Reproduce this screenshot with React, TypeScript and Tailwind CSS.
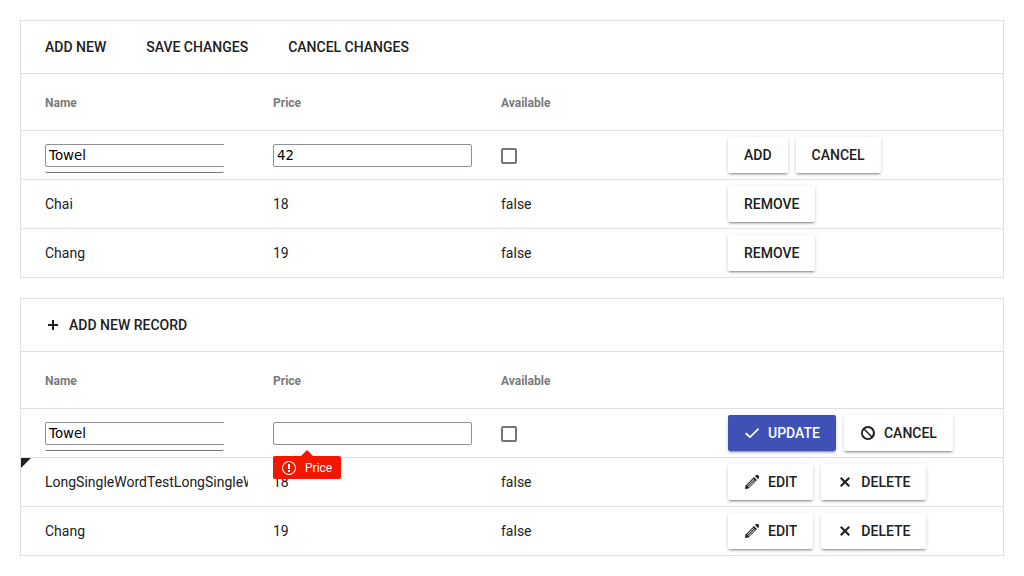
import type { ReactNode } from "react";

const btnBase =
  "flex h-9 items-center rounded-[2px] px-4 text-sm font-medium uppercase leading-5 shadow-[0_3px_1px_-2px_rgba(0,0,0,0.2),0_2px_2px_0_rgba(0,0,0,0.14),0_1px_5px_0_rgba(0,0,0,0.12)]";

function Icon({ name }: { name: "plus" | "check" | "cancel" | "edit" | "close" | "warning" }) {
  return (
    <svg viewBox="0 0 16 16" className="size-4 shrink-0" fill="currentColor">
      {name === "plus" && <path d="M7 3h2v4h4v2H9v4H7V9H3V7h4z" />}
      {name === "check" && <path d="M1 9l1.5-1.5L6 11l8-8L15 4.5 6 13.3z" />}
      {name === "cancel" && (
        <path
          fillRule="evenodd"
          d="M8 1a7 7 0 1 0 0 14A7 7 0 0 0 8 1zM8 3a5 5 0 0 1 4.030 7.970L5.030 3.970A5 5 0 0 1 8 3zM3.970 5.030L10.970 12.030A5 5 0 0 1 3.970 5.030z"
        />
      )}
      {name === "edit" && (
        <path
          fillRule="evenodd"
          d="M11 2l1-1h2l1 1v2l-1 1zM10 3l3 3-8.500 8.500L1 15l.5-3.500zM9.500 5L3 11.500l.5.5L10 5.500zM10.700 6.200L4.200 12.700l.5.5L11.200 6.700z"
        />
      )}
      {name === "close" && <path d="M13 4.500L9.500 8l3.500 3.500-1.500 1.500L8 9.500 4.500 13 3 11.500 6.500 8 3 4.500 4.500 3 8 6.500 11.500 3z" />}
      {name === "warning" && (
        <path
          fillRule="evenodd"
          d="M8 1a7 7 0 1 0 0 14A7 7 0 0 0 8 1zm0 1a6 6 0 1 1 0 12A6 6 0 0 1 8 2zM7 4h2v5H7zm0 6h2v2H7z"
        />
      )}
    </svg>
  );
}

function Button({ icon, primary, children }: { icon?: "check" | "cancel" | "edit" | "close"; primary?: boolean; children: ReactNode }) {
  return (
    <button className={`${btnBase} ${primary ? "bg-[#3f51b5] text-white" : "bg-white text-[#212121]"} ${icon ? "gap-2" : ""}`}>
      {icon && <Icon name={icon} />}
      {children}
    </button>
  );
}

function Row({ cells, last, dirty }: { cells: ReactNode[]; last?: boolean; dirty?: boolean }) {
  return (
    <div className={`grid grid-cols-[227px_228px_227px_300px] ${last ? "h-12" : "h-[49px]"}`}>
      {cells.map((cell, i) => (
        <div
          key={i}
          className={`relative flex min-w-0 items-center ${i ? "border-l border-l-white" : ""} ${last ? "" : "border-b border-b-[#e0e0e0]"} pl-6`}
        >
          {dirty && i === 0 && (
            <svg className="absolute left-0 top-0 size-[10px]" viewBox="0 0 10 10">
              <path d="M0 0h10L0 10z" fill="#212121" />
            </svg>
          )}
          {cell}
        </div>
      ))}
    </div>
  );
}

function NameEditor() {
  return (
    <div className="mt-[7px] flex h-[29px] w-[179px] flex-col overflow-hidden rounded-b-[2px] border-b border-[#757575]">
      <input
        defaultValue="Towel"
        className="h-[23px] w-[199px] shrink-0 rounded-[2px] border border-[#8f8f9d] px-[3px] font-['DejaVu_Sans',sans-serif] text-[13.333px] text-black"
      />
    </div>
  );
}

function PriceEditor({ value, error }: { value: string; error?: boolean }) {
  return (
    <div className="relative mt-px">
      <input
        defaultValue={value}
        className="block h-[23px] w-[199px] rounded-[2px] border border-[#8f8f9d] px-[3px] font-['DejaVu_Sans',sans-serif] text-[13.333px] text-black"
      />
      {error && (
        <div className="absolute left-0 top-[34px] z-10 flex h-[23px] w-[68px] items-center gap-2 rounded-[2px] bg-[#f31700] pl-2 text-xs text-white">
          <svg className="absolute -top-[6px] left-[28px] h-[6px] w-3" viewBox="0 0 12 6">
            <path d="M0 6l6-6 6 6z" fill="#f31700" />
          </svg>
          <Icon name="warning" />
          Price
        </div>
      )}
    </div>
  );
}

const Check = () => <div className="mt-px size-4 rounded-[2px] border-2 border-[#757575]" />;

function Header() {
  return (
    <div className="grid h-[57px] grid-cols-[228px_228px_227px_299px] items-center border-b border-[#e0e0e0] pt-0.5 text-xs font-bold text-[#7a7a7a]">
      <span className="pl-6">Name</span>
      <span className="pl-6">Price</span>
      <span className="pl-6">Available</span>
    </div>
  );
}

const toolbar = "flex h-[53px] items-center border-b border-[#e0e0e0] pl-6 text-sm font-medium uppercase";

export default function App() {
  return (
    <main className="flex h-[576px] flex-col gap-5 bg-white p-5 font-[Roboto,sans-serif] text-sm text-[#212121]">
      <section className="border border-[#e0e0e0]">
        <div className={`${toolbar} gap-10`}>
          <button className="uppercase">Add new</button>
          <button className="uppercase">Save changes</button>
          <button className="uppercase">Cancel changes</button>
        </div>
        <Header />
        <Row
          cells={[
            <NameEditor />,
            <PriceEditor value="42" />,
            <Check />,
            <div className="flex gap-2"><Button>Add</Button><Button>Cancel</Button></div>,
          ]}
        />
        <Row cells={["Chai", "18", "false", <Button>Remove</Button>]} />
        <Row last cells={["Chang", "19", "false", <Button>Remove</Button>]} />
      </section>
      <section className="border border-[#e0e0e0]">
        <div className={toolbar}>
          <button className="flex items-center gap-2 uppercase">
            <Icon name="plus" />
            Add new record
          </button>
        </div>
        <Header />
        <Row
          cells={[
            <NameEditor />,
            <PriceEditor value="" error />,
            <Check />,
            <div className="flex gap-2"><Button icon="check" primary>Update</Button><Button icon="cancel">Cancel</Button></div>,
          ]}
        />
        <Row
          dirty
          cells={[
            <span className="w-full overflow-hidden whitespace-nowrap">LongSingleWordTestLongSingleWordTest</span>,
            "18",
            "false",
            <div className="flex gap-2"><Button icon="edit">Edit</Button><Button icon="close">Delete</Button></div>,
          ]}
        />
        <Row
          last
          cells={["Chang", "19", "false", <div className="flex gap-2"><Button icon="edit">Edit</Button><Button icon="close">Delete</Button></div>]}
        />
      </section>
    </main>
  );
}
